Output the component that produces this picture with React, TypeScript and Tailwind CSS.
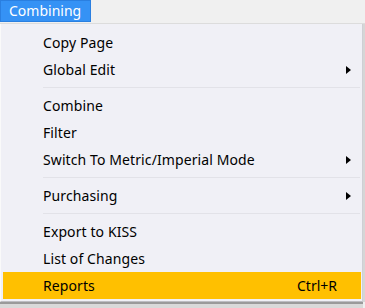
import React from "react";

type Item =
  | { kind: "item"; label: string; sub?: boolean; shortcut?: string; active?: boolean }
  | { kind: "sep" };

const items: Item[] = [
  { kind: "item", label: "Copy Page" },
  { kind: "item", label: "Global Edit", sub: true },
  { kind: "sep" },
  { kind: "item", label: "Combine" },
  { kind: "item", label: "Filter" },
  { kind: "item", label: "Switch To Metric/Imperial Mode", sub: true },
  { kind: "sep" },
  { kind: "item", label: "Purchasing", sub: true },
  { kind: "sep" },
  { kind: "item", label: "Export to KISS" },
  { kind: "item", label: "List of Changes" },
  { kind: "item", label: "Reports", shortcut: "Ctrl+R", active: true },
];

function Arrow() {
  return (
    <svg width="5" height="8" viewBox="0 0 5 8" className="block">
      <path d="M0 0 L5 4 L0 8 Z" fill="#000" />
    </svg>
  );
}

export default function App() {
  return (
    <div
      className="w-[365px] h-[308px] bg-[#f0f0f0] overflow-hidden flex flex-col text-[#000]"
      style={{ fontFamily: '"Noto Sans", "Open Sans", sans-serif' }}
    >
      <div className="h-[24px] shrink-0 flex items-start border-b border-[#dcdcdc]">
        <div className="h-[22px] w-[91px] bg-[#3592f5] border border-[#2a7fe0] text-white text-[14px] leading-[20px] pl-[8px]">
          Combining
        </div>
      </div>
      <div className="flex">
        <div className="w-[363px] bg-[#f0f0f6] border-l border-[#fafafa] border-r border-r-[#cfcfd4] border-b border-b-[#bdbdc2] pt-[5px] pb-[2px] pl-[2px] pr-[1px] flex flex-col">
          {items.map((it, i) =>
            it.kind === "sep" ? (
              <div key={i} className="h-[9px] flex items-center pl-[40px] pr-[1px]">
                <div className="h-px w-full bg-[#e2e2e8]" />
              </div>
            ) : (
              <div
                key={i}
                className={`h-[27px] flex items-center text-[14px] pl-[40px] ${
                  it.active ? "bg-[#ffc000]" : ""
                }`}
              >
                <span className="flex-1 tracking-[0.1px]">{it.label}</span>
                {it.shortcut && <span className="mr-[24px]">{it.shortcut}</span>}
                {it.sub && (
                  <span className="mr-[10px]">
                    <Arrow />
                  </span>
                )}
              </div>
            )
          )}
        </div>
        <div className="w-[2px] bg-[#d6d6d6]" />
      </div>
      <div className="h-[2px] w-[363px] bg-[#9a9a9a]" />
      <div className="flex-1 w-[363px] bg-[#d9d9d9]" />
    </div>
  );
}
